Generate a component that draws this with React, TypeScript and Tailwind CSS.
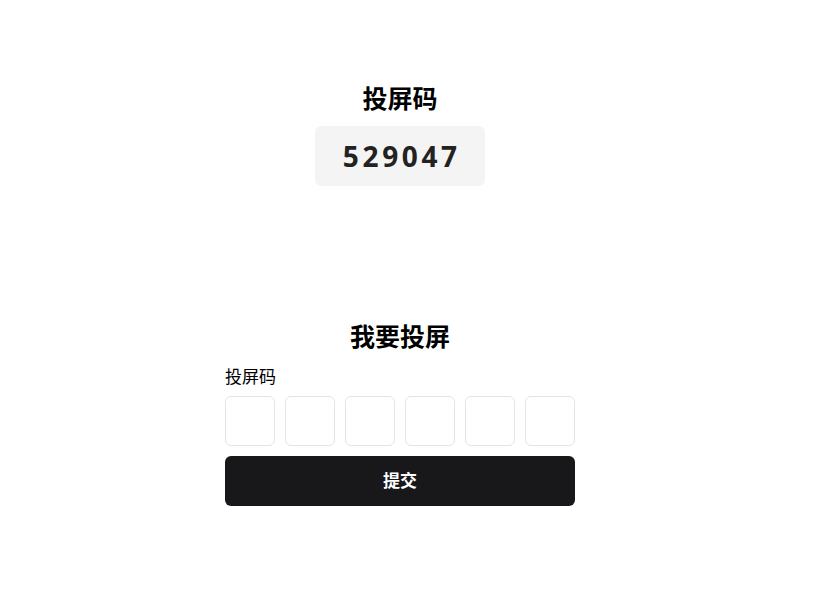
import React, { useState } from 'react';

const font = { fontFamily: '"Noto Sans", "Noto Sans CJK SC", sans-serif' };

export default function App() {
  const [digits, setDigits] = useState<string[]>(['', '', '', '', '', '']);

  const handleChange = (i: number, value: string) => {
    const v = value.replace(/\D/g, '').slice(-1);
    setDigits((prev) => prev.map((d, idx) => (idx === i ? v : d)));
  };

  return (
    <div className="min-h-screen w-[800px] bg-white text-black" style={font}>
      <div className="flex flex-col items-center pt-[82px]">
        <h2 className="text-[25px] leading-8 font-bold">投屏码</h2>
        <div className="mt-3 w-[170px] h-[60px] rounded-md bg-[#f4f4f4] flex items-center justify-center">
          <span className="text-[28px] font-bold tracking-[0.13em] pl-[0.13em] text-[#222]">529047</span>
        </div>
      </div>

      <div className="flex flex-col items-center pt-[134px]">
        <h2 className="text-[25px] leading-8 font-bold">我要投屏</h2>
        <form className="mt-[13px] w-[350px]" onSubmit={(e) => e.preventDefault()}>
          <label className="block text-[17px] leading-6 mb-[7px]">投屏码</label>
          <div className="flex gap-[10px]">
            {digits.map((d, i) => (
              <input
                key={i}
                value={d}
                onChange={(e) => handleChange(i, e.target.value)}
                inputMode="numeric"
                className="w-[50px] h-[50px] rounded-md border border-[#e4e4e7] text-center text-xl outline-none focus:border-[#18181b]"
              />
            ))}
          </div>
          <button
            type="submit"
            className="mt-[10px] w-full h-[50px] rounded-md bg-[#18181b] text-white text-[17px] font-bold"
          >
            提交
          </button>
        </form>
      </div>
    </div>
  );
}
